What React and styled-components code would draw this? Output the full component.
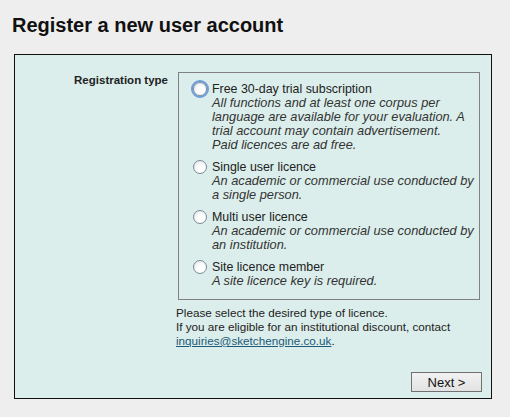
import React from 'react';
import styled, { createGlobalStyle } from 'styled-components';

const Global = createGlobalStyle`
    body {
        margin: 0;
        background: #eeeeee;
        font-family: "Liberation Sans", Arial, sans-serif;
        color: #222;
    }
`;

// lines are kept as in the original form
const options = [
    {
        title: 'Free 30-day trial subscription',
        lines: [
            'All functions and at least one corpus per',
            'language are available for your evaluation. A',
            'trial account may contain advertisement.',
            'Paid licences are ad free.',
        ],
        focus: true,
    },
    {
        title: 'Single user licence',
        lines: ['An academic or commercial use conducted by', 'a single person.'],
    },
    {
        title: 'Multi user licence',
        lines: ['An academic or commercial use conducted by', 'an institution.'],
    },
    {
        title: 'Site licence member',
        lines: ['A site licence key is required.'],
    },
];

const App = () => {
    return (
        <Page>
            <Global />
            <Title>Register a new user account</Title>
            <Panel>
                <Label>Registration type</Label>
                <Field>
                    <Choices>
                        {options.map((o) => (
                            <Option key={o.title}>
                                <Radio type="radio" name="licence" focus={o.focus ? 1 : 0} />
                                <OptionBody>
                                    <OptionTitle>{o.title}</OptionTitle>
                                    {o.lines.map((l) => (
                                        <Note key={l}>{l}</Note>
                                    ))}
                                </OptionBody>
                            </Option>
                        ))}
                    </Choices>
                    <Help>
                        Please select the desired type of licence.<br />
                        If you are eligible for an institutional discount, contact<br />
                        <Mail href="#">inquiries@sketchengine.co.uk</Mail>.
                    </Help>
                </Field>
                <Actions>
                    <NextBtn type="button">Next &gt;</NextBtn>
                </Actions>
            </Panel>
        </Page>
    );
};

export default App;

const Page = styled.div`
    width: 510px;
    height: 417px;
    padding-top: 14px;
    box-sizing: border-box;
`;

const Title = styled.h2`
    margin: 0 0 18px 12px;
    font-size: 20px;
    line-height: 22px;
    font-weight: bold;
    color: #111;
`;

const Panel = styled.div`
    margin-left: 14px;
    width: 478px;
    box-sizing: border-box;
    border: 1px solid #111;
    background: #dbeeeb;
    padding: 17px 11px 6px 0;
    display: grid;
    grid-template-columns: 153px 302px;
    column-gap: 10px;
`;

const Label = styled.div`
    text-align: right;
    font-size: 11.5px;
    font-weight: bold;
    line-height: 14px;
    padding-top: 1px;
    color: #222;
`;

const Field = styled.div`
    font-size: 12px;
    line-height: 14px;
`;

const Choices = styled.div`
    border: 1px solid #808080;
    padding: 9px 8px 11px 14px;
    display: flex;
    flex-direction: column;
    gap: 8px;
`;

const Option = styled.label`
    display: flex;
    align-items: flex-start;
    gap: 6px;
`;

const Radio = styled.input`
    appearance: none;
    margin: 0;
    flex: none;
    width: 14px;
    height: 14px;
    border-radius: 50%;
    border: 1px solid #7c8a96;
    background: radial-gradient(circle at 60% 65%, #ffffff 30%, #dde1e5 100%);
    box-sizing: border-box;
    outline: ${(p) => (p.focus ? '2px solid #6f9bd8' : 'none')};
    outline-offset: 0;
`;

const OptionBody = styled.div`
    color: #222;
    margin-left: -1px;
`;

const OptionTitle = styled.div`
    font-size: 12.4px;
    white-space: nowrap;
`;

const Note = styled.div`
    font-size: 12.8px;
    font-style: italic;
    color: #333;
    white-space: nowrap;
`;

const Help = styled.div`
    margin: 6px 0 0 -2px;
    font-size: 11.7px;
    color: #222;
`;

const Mail = styled.a`
    color: #1d5a78;
`;

const Actions = styled.div`
    grid-column: 2;
    display: flex;
    justify-content: flex-end;
    margin-top: 24px;
    margin-right: -2px;
`;

const NextBtn = styled.button`
    width: 71px;
    height: 20px;
    padding: 0;
    font-family: "Liberation Sans", sans-serif;
    font-size: 13px;
    color: #111;
    border: 1px solid #707070;
    background: linear-gradient(#f2f2f2, #e2e2e2);
`;
